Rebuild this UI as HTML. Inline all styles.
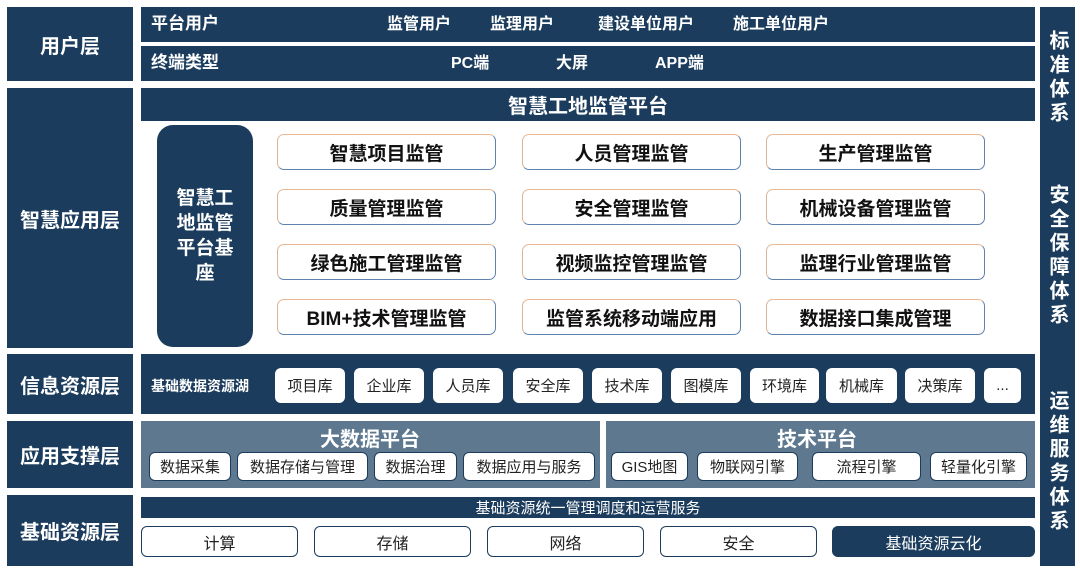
<!DOCTYPE html>
<html><head><meta charset="utf-8"><style>
*{margin:0;padding:0;box-sizing:border-box}
body{width:1080px;height:569px;background:#fff;position:relative;overflow:hidden;font-family:"Liberation Sans","Noto Sans CJK SC",sans-serif}
.a{position:absolute;display:flex;align-items:center;justify-content:center}
.n{background:#1b3c5c;color:#fff}
.L{font-size:20px;font-weight:bold}
.t{position:absolute;color:#fff;font-weight:bold;font-size:16px;line-height:20px;white-space:nowrap}
.m{background:#fff;border:1.5px solid #5f82ad;border-top-color:#e9b995;border-left-color:#dbb49a;border-radius:7px;font-size:19px;font-weight:bold;color:#111;width:219px;height:36px}
.c{background:#fff;border-radius:6px;font-size:15px;color:#222}
.s{background:#fff;border:1.5px solid #1b3c5c;border-radius:6px;font-size:15px;color:#222;height:29px;top:452px}
.b{background:#fff;border:1.5px solid #1b3c5c;border-radius:6px;font-size:16px;color:#222;height:31px;top:526px;width:157px}
.v{writing-mode:vertical-rl;font-size:20px;font-weight:bold;color:#fff;letter-spacing:4px;line-height:20px;position:absolute;left:1047px}
</style></head><body>
<div class="a n L" style="left:7px;top:7px;width:126px;height:74px">用户层</div>
<div class="a n L" style="left:7px;top:88px;width:126px;height:260px">智慧应用层</div>
<div class="a n L" style="left:7px;top:354px;width:126px;height:60px">信息资源层</div>
<div class="a n L" style="left:7px;top:421px;width:126px;height:67px">应用支撑层</div>
<div class="a n L" style="left:7px;top:495px;width:126px;height:71px">基础资源层</div>
<div class="n" style="position:absolute;left:1040px;top:7px;width:35px;height:559px"></div>
<div class="v" style="top:30px">标准体系</div>
<div class="v" style="top:184px">安全保障体系</div>
<div class="v" style="top:390px">运维服务体系</div>
<div class="n" style="position:absolute;left:141px;top:7px;width:894px;height:35px"></div>
<div class="n" style="position:absolute;left:141px;top:46px;width:894px;height:35px"></div>
<div class="t" style="left:151px;top:14px;font-size:17px">平台用户</div>
<div class="t" style="left:387px;top:15px">监管用户</div>
<div class="t" style="left:490px;top:15px">监理用户</div>
<div class="t" style="left:598px;top:15px">建设单位用户</div>
<div class="t" style="left:733px;top:15px">施工单位用户</div>
<div class="t" style="left:151px;top:53px;font-size:17px">终端类型</div>
<div class="t" style="left:451px;top:54px">PC端</div>
<div class="t" style="left:556px;top:54px">大屏</div>
<div class="t" style="left:655px;top:54px">APP端</div>
<div class="a n" style="left:141px;top:88px;width:894px;height:33px;font-size:20px;font-weight:bold">智慧工地监管平台</div>
<div class="a n" style="left:157px;top:125px;width:96px;height:222px;border-radius:16px;font-size:19px;font-weight:bold;text-align:center;line-height:25px"><div style="width:60px">智慧工地监管平台基座</div></div>
<div class="a m" style="left:277px;top:134px">智慧项目监管</div>
<div class="a m" style="left:522px;top:134px">人员管理监管</div>
<div class="a m" style="left:766px;top:134px">生产管理监管</div>
<div class="a m" style="left:277px;top:189px">质量管理监管</div>
<div class="a m" style="left:522px;top:189px">安全管理监管</div>
<div class="a m" style="left:766px;top:189px">机械设备管理监管</div>
<div class="a m" style="left:277px;top:244px">绿色施工管理监管</div>
<div class="a m" style="left:522px;top:244px">视频监控管理监管</div>
<div class="a m" style="left:766px;top:244px">监理行业管理监管</div>
<div class="a m" style="left:277px;top:299px">BIM+技术管理监管</div>
<div class="a m" style="left:522px;top:299px">监管系统移动端应用</div>
<div class="a m" style="left:766px;top:299px">数据接口集成管理</div>
<div class="n" style="position:absolute;left:141px;top:354px;width:894px;height:60px"></div>
<div class="t" style="left:151px;top:376px;font-size:14px">基础数据资源湖</div>
<div class="a c" style="left:275px;top:368px;width:70px;height:35px">项目库</div>
<div class="a c" style="left:354px;top:368px;width:70px;height:35px">企业库</div>
<div class="a c" style="left:433px;top:368px;width:70px;height:35px">人员库</div>
<div class="a c" style="left:513px;top:368px;width:70px;height:35px">安全库</div>
<div class="a c" style="left:592px;top:368px;width:70px;height:35px">技术库</div>
<div class="a c" style="left:671px;top:368px;width:70px;height:35px">图模库</div>
<div class="a c" style="left:750px;top:368px;width:69px;height:35px">环境库</div>
<div class="a c" style="left:826px;top:368px;width:71px;height:35px">机械库</div>
<div class="a c" style="left:905px;top:368px;width:70px;height:35px">决策库</div>
<div class="a c" style="left:984px;top:368px;width:37px;height:35px">...</div>
<div style="position:absolute;left:141px;top:421px;width:459px;height:67px;background:#5e7890"></div>
<div style="position:absolute;left:606px;top:421px;width:429px;height:67px;background:#5e7890"></div>
<div class="t" style="left:320px;top:429px;font-size:20px;line-height:22px">大数据平台</div>
<div class="t" style="left:777px;top:429px;font-size:20px;line-height:22px">技术平台</div>
<div class="a s" style="left:149px;width:82px">数据采集</div>
<div class="a s" style="left:237px;width:131px">数据存储与管理</div>
<div class="a s" style="left:374px;width:83px">数据治理</div>
<div class="a s" style="left:463px;width:132px">数据应用与服务</div>
<div class="a s" style="left:611px;width:77px">GIS地图</div>
<div class="a s" style="left:697px;width:101px">物联网引擎</div>
<div class="a s" style="left:812px;width:109px">流程引擎</div>
<div class="a s" style="left:930px;width:97px">轻量化引擎</div>
<div class="a n" style="left:141px;top:497px;width:894px;height:21px;font-size:15px">基础资源统一管理调度和运营服务</div>
<div class="a b" style="left:141px">计算</div>
<div class="a b" style="left:314px">存储</div>
<div class="a b" style="left:487px">网络</div>
<div class="a b" style="left:660px">安全</div>
<div class="a b" style="left:832px;width:203px;color:#fff;background:#1b3c5c">基础资源云化</div>
</body></html>
